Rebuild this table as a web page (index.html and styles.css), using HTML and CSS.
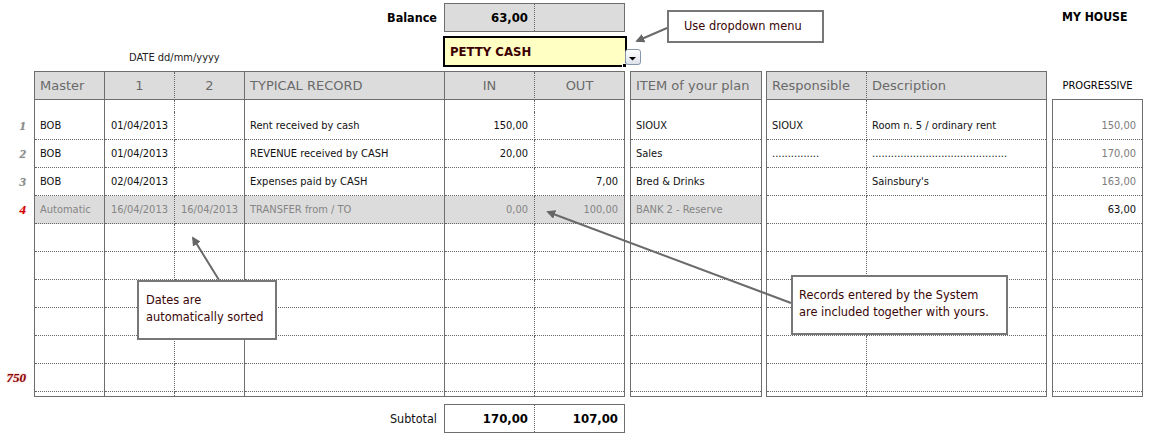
FILE: index.html
```html
<!DOCTYPE html>
<html>
<head>
<meta charset="utf-8">
<title>Petty cash</title>
<link rel="stylesheet" href="styles.css">
</head>
<body>
<div class="page">
  <div class="top1">
    <div class="bal-label">Balance</div>
    <div class="pair bal"><div class="pc">63,00</div><div class="pc"></div></div>
    <div class="myhouse">MY HOUSE</div>
  </div>
  <div class="top2">
    <div class="date-label">DATE dd/mm/yyyy</div>
    <div class="petty">PETTY CASH<span class="handle"></span><span class="ddbtn"><svg width="14" height="14" viewBox="0 0 14 14"><path d="M3 7h7l-3.5 3.5z" fill="#000"/></svg></span></div>
  </div>

  <div class="sheet">
    <div class="rownums">
      <div class="rn">1</div><div class="rn">2</div><div class="rn">3</div><div class="rn red">4</div>
      <div class="rn"></div><div class="rn"></div><div class="rn"></div><div class="rn"></div><div class="rn"></div>
      <div class="rn dark">750</div>
    </div>

    <div class="tbl t1">
      <div class="h sr">Master</div><div class="h dr ctr">1</div><div class="h sr ctr">2</div><div class="h sr">TYPICAL RECORD</div><div class="h dr ctr">IN</div><div class="h ctr">OUT</div>
      <div class="sp sr"></div><div class="sp dr"></div><div class="sp sr"></div><div class="sp sr"></div><div class="sp dr"></div><div class="sp"></div>

      <div class="d sr">BOB</div><div class="d dr num">01/04/2013</div><div class="d sr"></div><div class="d sr">Rent received by cash</div><div class="d dr num">150,00</div><div class="d num"></div>
      <div class="d sr">BOB</div><div class="d dr num">01/04/2013</div><div class="d sr"></div><div class="d sr">REVENUE received by CASH</div><div class="d dr num">20,00</div><div class="d num"></div>
      <div class="d sr">BOB</div><div class="d dr num">02/04/2013</div><div class="d sr"></div><div class="d sr">Expenses paid by CASH</div><div class="d dr num"></div><div class="d num">7,00</div>
      <div class="d sr g">Automatic</div><div class="d dr num g">16/04/2013</div><div class="d sr num g">16/04/2013</div><div class="d sr g">TRANSFER from / TO</div><div class="d dr num g">0,00</div><div class="d num g">100,00</div>

      <div class="d sr"></div><div class="d dr"></div><div class="d sr"></div><div class="d sr"></div><div class="d dr"></div><div class="d"></div>
      <div class="d sr"></div><div class="d dr"></div><div class="d sr"></div><div class="d sr"></div><div class="d dr"></div><div class="d"></div>
      <div class="d sr"></div><div class="d dr"></div><div class="d sr"></div><div class="d sr"></div><div class="d dr"></div><div class="d"></div>
      <div class="d sr"></div><div class="d dr"></div><div class="d sr"></div><div class="d sr"></div><div class="d dr"></div><div class="d"></div>
      <div class="d sr"></div><div class="d dr"></div><div class="d sr"></div><div class="d sr"></div><div class="d dr"></div><div class="d"></div>
      <div class="d sr"></div><div class="d dr"></div><div class="d sr"></div><div class="d sr"></div><div class="d dr"></div><div class="d"></div>

      <div class="e sr"></div><div class="e dr"></div><div class="e sr"></div><div class="e sr"></div><div class="e dr"></div><div class="e"></div>
    </div>

    <div class="tbl t2">
      <div class="h">ITEM of your plan</div>
      <div class="sp"></div>
      <div class="d">SIOUX</div>
      <div class="d">Sales</div>
      <div class="d">Bred &amp; Drinks</div>
      <div class="d g">BANK 2 - Reserve</div>
      <div class="d"></div><div class="d"></div><div class="d"></div><div class="d"></div><div class="d"></div><div class="d"></div>
      <div class="e"></div>
    </div>

    <div class="tbl t3">
      <div class="h dr">Responsible</div><div class="h">Description</div>
      <div class="sp dr"></div><div class="sp"></div>
      <div class="d dr">SIOUX</div><div class="d">Room n. 5 / ordinary rent</div>
      <div class="d dr">...............</div><div class="d">...........................................</div>
      <div class="d dr"></div><div class="d">Sainsbury's</div>
      <div class="d dr"></div><div class="d"></div>
      <div class="d dr"></div><div class="d"></div>
      <div class="d dr"></div><div class="d"></div>
      <div class="d dr"></div><div class="d"></div>
      <div class="d dr"></div><div class="d"></div>
      <div class="d dr"></div><div class="d"></div>
      <div class="d dr"></div><div class="d"></div>
      <div class="e dr"></div><div class="e"></div>
    </div>

    <div class="progcol">
      <div class="prog-head">PROGRESSIVE</div>
      <div class="tbl prog">
        <div class="sp"></div>
        <div class="d num pg">150,00</div>
        <div class="d num pg">170,00</div>
        <div class="d num pg">163,00</div>
        <div class="d num">63,00</div>
        <div class="d"></div><div class="d"></div><div class="d"></div><div class="d"></div><div class="d"></div><div class="d"></div>
        <div class="e"></div>
      </div>
    </div>
  </div>

  <div class="subrow">
    <div class="sub-label">Subtotal</div>
    <div class="pair sub"><div class="pc">170,00</div><div class="pc">107,00</div></div>
  </div>

  <svg class="arrows" width="1150" height="436" viewBox="0 0 1150 436">
    <defs>
      <marker id="ah" viewBox="0 0 10 10" refX="8" refY="5" markerWidth="4.5" markerHeight="4.5" orient="auto">
        <path d="M0 0L10 5L0 10z" fill="#666"/>
      </marker>
    </defs>
    <path d="M667 28L637 41" stroke="#6a6a6a" stroke-width="2" fill="none" marker-end="url(#ah)"/>
    <path d="M219 280L193 238" stroke="#6a6a6a" stroke-width="2" fill="none" marker-end="url(#ah)"/>
    <path d="M791 303L548 212" stroke="#6a6a6a" stroke-width="2" fill="none" marker-end="url(#ah)"/>
  </svg>

  <div class="callout co1">Use dropdown menu</div>
  <div class="callout co2">Dates are<br>automatically sorted</div>
  <div class="callout co3">Records entered by the System<br>are included together with yours.</div>
</div>
</body>
</html>
```

FILE: styles.css
```css
* {
  box-sizing: border-box;
}

body {
  margin: 0;
  background: #fff;
  font-family: "DejaVu Sans Condensed", "DejaVu Sans", sans-serif;
  font-stretch: condensed;
  font-size: 11px;
  color: #111;
}

.page {
  position: relative;
  width: 1150px;
  height: 436px;
  overflow: hidden;
}

/* ---------- top area ---------- */
.top1 {
  display: flex;
  height: 36px;
  padding-top: 3px;
}

.bal-label {
  width: 444px;
  text-align: right;
  padding-right: 7px;
  font-weight: bold;
  font-size: 12.5px;
  line-height: 29px;
  color: #000;
}

.pair {
  display: grid;
  grid-template-columns: 90px 89px;
  width: 181px;
  height: 29px;
  border: 1px solid #6e6e6e;
}

.pair .pc {
  border-right: 1px dotted #666;
  text-align: right;
  padding-right: 6px;
  font-weight: bold;
  font-size: 13px;
  line-height: 27px;
  color: #000;
}

.pair .pc:last-child {
  border-right: 0;
}

.bal {
  background: #dcdcdc;
}

.myhouse {
  margin-left: 437px;
  font-weight: bold;
  font-size: 12.2px;
  line-height: 29px;
  color: #000;
}

.top2 {
  display: flex;
  height: 31px;
  margin-bottom: 4px;
}

.date-label {
  width: 443px;
  padding-left: 129px;
  padding-top: 15px;
  line-height: 13px;
  font-size: 11px;
  color: #222;
}

.petty {
  position: relative;
  width: 184px;
  height: 31px;
  border: 2px solid #000;
  background: #ffffc4;
  padding-left: 5px;
  font-weight: bold;
  font-size: 13px;
  line-height: 27px;
  color: #3c0000;
}

.handle {
  position: absolute;
  right: -2px;
  bottom: -3px;
  width: 5px;
  height: 5px;
  background: #000;
  border: 1px solid #fff;
}

.ddbtn {
  position: absolute;
  left: 180px;
  top: 11px;
  width: 16px;
  height: 16px;
  border: 1px solid #8797ab;
  border-radius: 3px;
  background: linear-gradient(#ffffff, #dde2ea);
  display: block;
}

.ddbtn svg {
  display: block;
}

/* ---------- sheet ---------- */
.sheet {
  display: flex;
  align-items: flex-start;
  height: 326px;
}

.rownums {
  width: 34px;
  padding-top: 41px;
}

.rn {
  height: 28px;
  line-height: 27px;
  text-align: right;
  padding-right: 8px;
  font-family: "Liberation Serif", serif;
  font-style: italic;
  font-weight: bold;
  font-size: 13px;
  color: #8c8c8c;
  text-shadow: 0 0 1px #bbb;
}

.rn.red {
  color: #d00000;
  text-shadow: 0 0 1px #f99;
}

.rn.dark {
  color: #800000;
  text-shadow: 0 0 2px #f88;
}

.tbl {
  display: grid;
  align-content: start;
  border: 1px solid #6e6e6e;
}

.t1 {
  width: 591px;
  grid-template-columns: 70px 70px 70px 200px 90px 89px;
}

.t2 {
  width: 132px;
  margin-left: 5px;
  grid-template-columns: 130px;
}

.t3 {
  width: 281px;
  margin-left: 4px;
  grid-template-columns: 100px 179px;
}

.progcol {
  width: 91px;
  margin-left: 5px;
}

.prog-head {
  height: 28px;
  line-height: 30px;
  text-align: center;
  font-size: 11px;
  color: #000;
}

.prog {
  width: 91px;
  grid-template-columns: 89px;
}

.h {
  height: 28px;
  background: #dcdcdc;
  border-bottom: 1px solid #6e6e6e;
  color: #6a6a6a;
  font-family: "DejaVu Sans", sans-serif;
  font-stretch: normal;
  font-size: 13px;
  line-height: 27px;
  padding: 0 5px;
  white-space: nowrap;
  overflow: hidden;
}

.sp {
  height: 12px;
}

.d {
  height: 28px;
  border-bottom: 1px dotted #666;
  line-height: 27px;
  padding: 0 5px;
  white-space: nowrap;
  overflow: hidden;
  color: #111;
}

.e {
  height: 4px;
}

.sr {
  border-right: 1px solid #6e6e6e;
}

.dr {
  border-right: 1px dotted #666;
}

.num {
  text-align: right;
  padding-right: 6px;
}

.ctr {
  text-align: center;
}

.d.g {
  background: #dcdcdc;
  color: #858585;
}

.d.pg {
  color: #7c7c7c;
}

/* ---------- subtotal ---------- */
.subrow {
  display: flex;
  margin-top: 7px;
}

.sub-label {
  width: 444px;
  text-align: right;
  padding-right: 7px;
  font-size: 12.5px;
  line-height: 29px;
  color: #111;
}

/* ---------- overlays ---------- */
.arrows {
  position: absolute;
  left: 0;
  top: 0;
  pointer-events: none;
}

.callout {
  position: absolute;
  background: #fff;
  border: 2px solid #777;
  color: #3a0606;
  font-family: "DejaVu Sans", sans-serif;
  font-stretch: normal;
  font-size: 11.4px;
  line-height: 17px;
  white-space: nowrap;
}

.co1 {
  left: 667px;
  top: 10px;
  width: 157px;
  height: 33px;
  padding: 6px 0 0 15px;
}

.co2 {
  left: 137px;
  top: 280px;
  width: 140px;
  height: 60px;
  padding: 10px 0 0 7px;
}

.co3 {
  left: 791px;
  top: 275px;
  width: 217px;
  height: 60px;
  padding: 10px 0 0 6px;
}
```
